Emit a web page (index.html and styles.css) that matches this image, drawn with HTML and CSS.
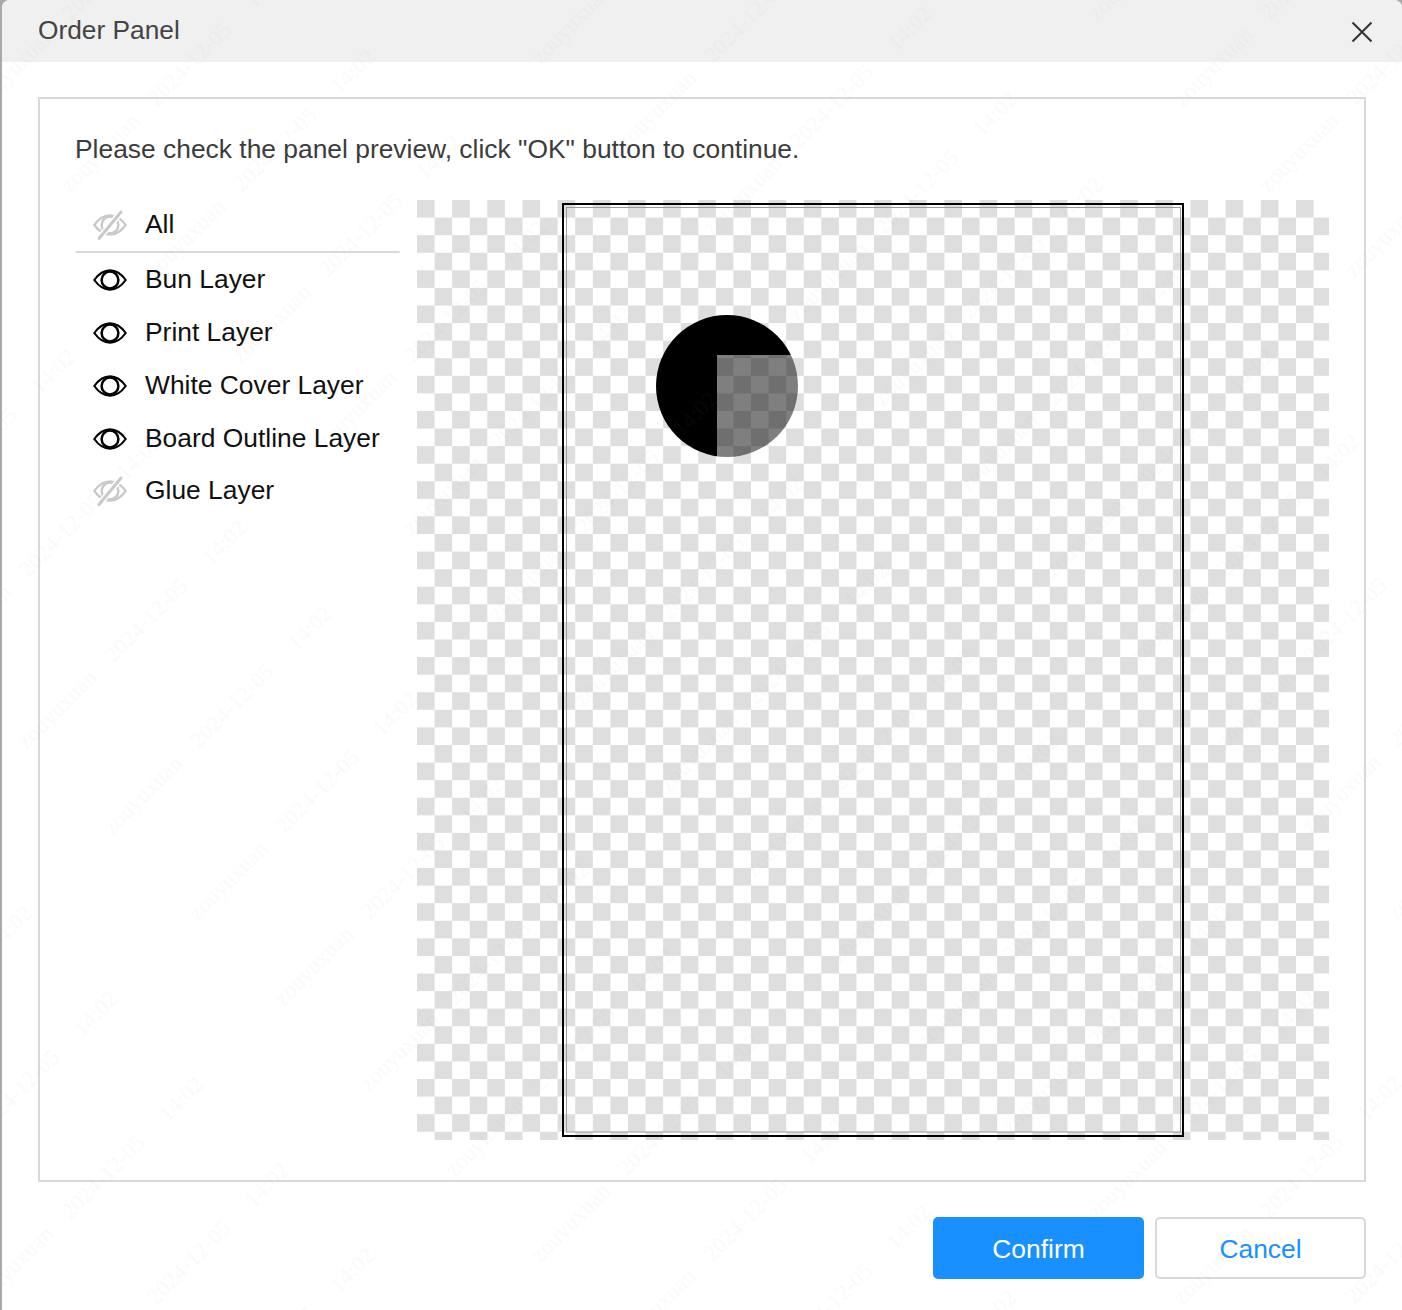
FILE: index.html
```html
<!DOCTYPE html>
<html lang="en">
<head>
<meta charset="utf-8">
<title>Order Panel</title>
<link rel="stylesheet" href="styles.css">
</head>
<body>
<svg width="0" height="0" class="defs">
  <defs>
    <symbol id="eye" viewBox="0 0 34 22">
      <path d="M1.3 11C6 4.4 11 1.4 17 1.4S28 4.4 32.7 11C28 17.6 23 20.6 17 20.6S6 17.6 1.3 11Z" fill="none" stroke="currentColor" stroke-width="2.1"/>
      <circle cx="17" cy="11" r="8.4" fill="none" stroke="currentColor" stroke-width="2.5"/>
    </symbol>
    <symbol id="eye-off" viewBox="0 0 34 34">
      <path d="M1.3 17C6 10.4 11 7.4 17 7.4S28 10.4 32.7 17C28 23.6 23 26.6 17 26.6S6 23.6 1.3 17Z" fill="none" stroke="currentColor" stroke-width="2.2"/>
      <circle cx="17" cy="17" r="8.4" fill="none" stroke="currentColor" stroke-width="2.4"/>
      <path d="M6 30.5 28 4" fill="none" stroke="#fff" stroke-width="6"/>
      <path d="M6 30.5 28 4" fill="none" stroke="currentColor" stroke-width="3" stroke-linecap="round"/>
    </symbol>
  </defs>
</svg>
<div class="dialog">
  <header class="dialog-header">
    <h1 class="dialog-title">Order Panel</h1>
    <button class="close" type="button" aria-label="Close">
      <svg width="22" height="22" viewBox="0 0 22 22"><path d="M1.5 1.5 20.5 20.5M20.5 1.5 1.5 20.5" fill="none" stroke="#333" stroke-width="2"/></svg>
    </button>
  </header>
  <main class="dialog-main">
    <section class="panel">
      <p class="hint">Please check the panel preview, click "OK" button to continue.</p>
      <div class="panel-body">
        <ul class="layers">
          <li class="layer layer-all"><svg class="icon icon-off"><use href="#eye-off"/></svg><span>All</span></li>
          <li class="layer"><svg class="icon"><use href="#eye"/></svg><span>Bun Layer</span></li>
          <li class="layer"><svg class="icon"><use href="#eye"/></svg><span>Print Layer</span></li>
          <li class="layer"><svg class="icon"><use href="#eye"/></svg><span>White Cover Layer</span></li>
          <li class="layer"><svg class="icon"><use href="#eye"/></svg><span>Board Outline Layer</span></li>
          <li class="layer layer-last"><svg class="icon icon-off"><use href="#eye-off"/></svg><span>Glue Layer</span></li>
        </ul>
        <svg class="preview" width="912" height="940" viewBox="0 0 912 940">
          <defs>
            <pattern id="checker" width="35.16" height="35.16" patternUnits="userSpaceOnUse">
              <rect width="35.16" height="35.16" fill="#fff"/>
              <rect width="17.58" height="17.58" fill="#dedede"/>
              <rect x="17.58" y="17.58" width="17.58" height="17.58" fill="#dedede"/>
            </pattern>
            <clipPath id="disc"><circle cx="310" cy="186" r="71"/></clipPath>
          </defs>
          <rect width="912" height="940" fill="url(#checker)"/>
          <rect x="146" y="4" width="620" height="932" fill="none" stroke="#000" stroke-width="2"/>
          <rect x="149.5" y="7.5" width="614" height="924.5" fill="none" stroke="#999" stroke-width="1"/>
          <g clip-path="url(#disc)">
            <path d="M230 105H390V155H300V265H230Z" fill="#000"/>
            <rect x="300" y="155" width="90" height="110" fill="#000" fill-opacity=".5"/>
          </g>
        </svg>
      </div>
    </section>
  </main>
  <footer class="dialog-footer">
    <button class="btn btn-primary" type="button">Confirm</button>
    <button class="btn btn-default" type="button">Cancel</button>
  </footer>
</div>
<svg class="watermark" width="1402" height="1310" aria-hidden="true">
  <defs>
    <pattern id="wm" width="424" height="121" patternUnits="userSpaceOnUse" patternTransform="rotate(-45) translate(-101.2 -2.4)">
      <text class="wm-text" x="64" y="68" text-anchor="middle">zouyuxuan</text>
      <text class="wm-text" x="190" y="68" text-anchor="middle">2024-12-05</text>
      <text class="wm-text" x="300" y="68" text-anchor="middle">14:02</text>
    </pattern>
  </defs>
  <rect width="1402" height="1310" fill="url(#wm)"/>
</svg>
</body>
</html>
```
FILE: styles.css
```css
* { box-sizing: border-box; }
html, body { margin: 0; padding: 0; }
body {
  width: 1402px;
  height: 1310px;
  overflow: hidden;
  background: #a9a9a9;
  padding-left: 2px;
  font-family: "Liberation Sans", Arial, sans-serif;
  position: relative;
}
.defs { position: absolute; }
.dialog {
  height: 1310px;
  background: #fff;
  border-radius: 8px 8px 0 0;
  overflow: hidden;
  display: flex;
  flex-direction: column;
}
.dialog-header {
  height: 62px;
  flex: none;
  background: #f0f0f0;
  display: flex;
  align-items: center;
  justify-content: space-between;
  padding: 0 29px 0 36px;
}
.dialog-title {
  margin: 0 0 1px;
  font-size: 26.3px;
  font-weight: 400;
  color: #444;
}
.close {
  border: 0;
  background: none;
  padding: 0;
  width: 22px;
  height: 22px;
  margin-top: 2px;
}
.close svg { display: block; }
.dialog-main { padding: 35px 36px 0; }
.panel {
  height: 1085px;
  border: 2px solid #d9d9d9;
  padding: 32px 35px 0;
}
.hint {
  margin: 0 0 33px;
  font-size: 26.4px;
  line-height: 36px;
  color: #3c3c3c;
}
.panel-body { display: flex; gap: 17px; }
.layers {
  list-style: none;
  margin: 0;
  padding: 0;
  width: 325px;
  flex: none;
}
.layer {
  height: 53px;
  display: flex;
  align-items: center;
  gap: 18.5px;
  padding-left: 17.5px;
  font-size: 26.4px;
  color: #111;
}
.layer-all {
  border-bottom: 2px solid #d9d9d9;
  border-radius: 0 0 2px 2px;
  padding-bottom: 2px;
}
.layer-last { margin-top: -1px; }
.icon { width: 34px; height: 22px; flex: none; color: #000; }
.icon-off { height: 34px; color: #c9c9c9; }
.preview { display: block; flex: none; }
.dialog-footer {
  display: flex;
  justify-content: flex-end;
  gap: 11px;
  padding: 35px 36px 0;
}
.btn {
  width: 211px;
  height: 62px;
  border-radius: 5px;
  font-family: inherit;
  font-size: 26.4px;
  padding: 2px 0 0;
}
.btn-primary { border: 0; background: #1890ff; color: #fff; }
.btn-default { border: 2px solid #d9d9d9; background: #fff; color: #1890ff; }
.watermark { position: absolute; left: 0; top: 0; pointer-events: none; }
.wm-text {
  font-family: "Liberation Serif", serif;
  font-size: 23px;
  fill: rgba(140, 140, 140, .05);
}
```
